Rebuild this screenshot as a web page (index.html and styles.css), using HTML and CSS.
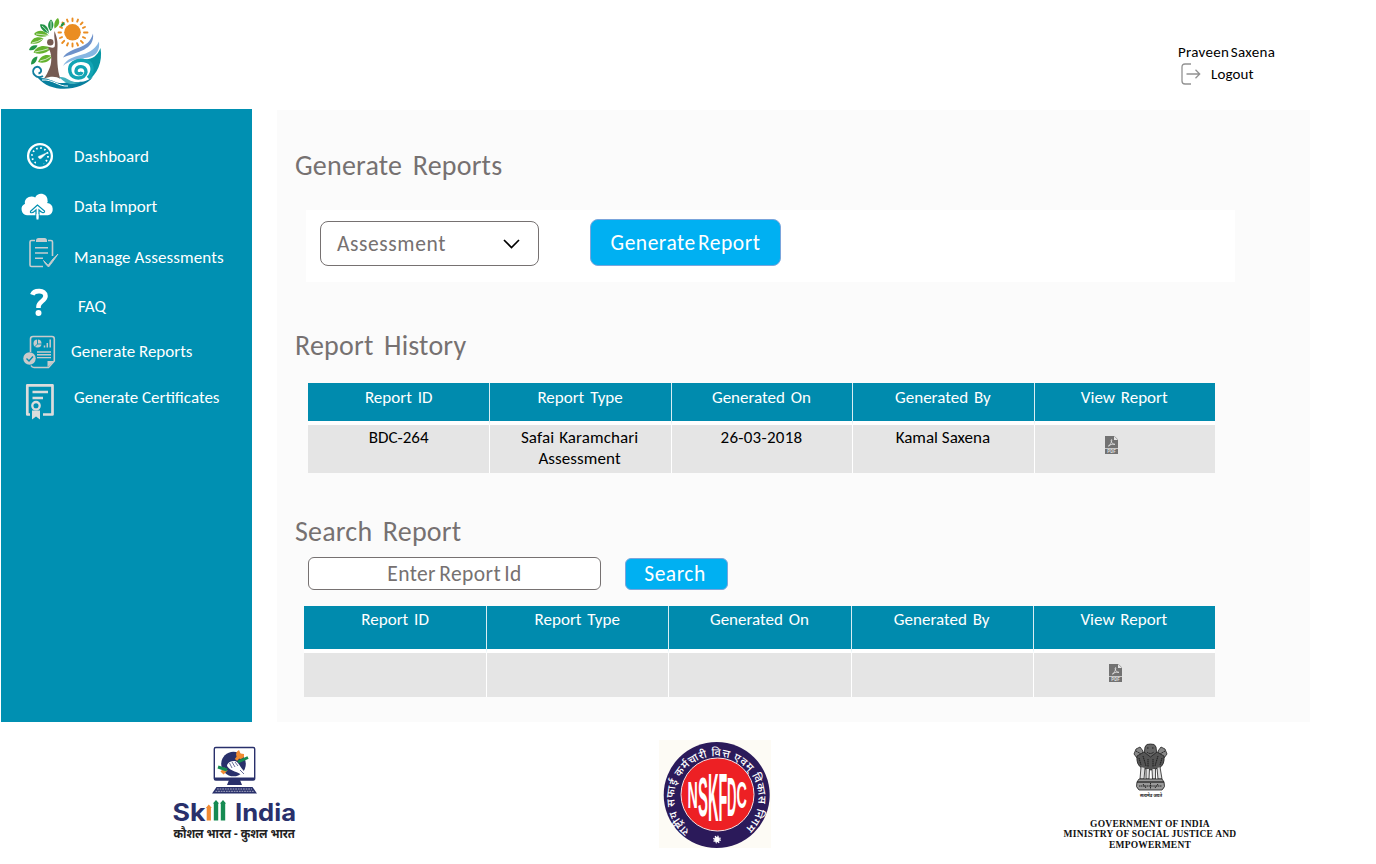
FILE: index.html
```html
<!DOCTYPE html>
<html lang="en">
<head>
<meta charset="utf-8">
<title>Generate Reports</title>
<link rel="stylesheet" href="styles.css">
</head>
<body>
<svg width="0" height="0" class="defs" aria-hidden="true">
  <symbol id="pdf" viewBox="0 0 13 18">
    <path d="M0 0H9L13 4V12.2H0Z" fill="#727272"/>
    <path d="M9 0V4H13Z" fill="#e4e4e4"/>
    <path d="M9.5 .3L12.8 3.6" stroke="#999" stroke-width=".7"/>
    <rect y="13" width="13" height="5" fill="#727272"/>
    <path d="M6.2 3.3C7.2 3.3 6.7 5 6.3 6.2C5.6 8.2 4.3 10.4 3.5 10.2C2.7 9.6 6 8 10 8.3C9 8.9 6.3 7.4 6 4.2" fill="none" stroke="#ddd" stroke-width=".9"/>
    <text x="6.5" y="17" text-anchor="middle" class="pdf-label">PDF</text>
  </symbol>
</svg>

<header class="header">
  <svg class="brand" width="76" height="76" viewBox="27 15 76 76">
    <circle cx="72.500" cy="32.300" r="8.300" fill="#ea8d22"/>
    <g stroke="#ea8d22" stroke-width="1.900" stroke-linecap="round">
      <path d="M72.500 18.500v2.500M72.500 43.500v3M58.500 32.500h2.500M84 32.500h3.500M62.500 22.500l1.800 1.800M80.900 40.900l2 2M82.500 22.500l-1.800 1.800M64.200 40.800l-2 2.200M67 19.600l.8 2M78 19.600l-.8 2M68 43.200l-1 2.300M77 43.200l1 2.300M60 27l2 .9M85 27l-2 .9M60 38l2-.9M85 38l-2-.9"/>
    </g>
    <g fill="#64b22e">
      <path d="M34 34C38 29.500 44 29.500 48.500 35.500C43 37.500 37 37 34 34Z"/>
      <path d="M30.500 43.500C32 37.500 38 36 43.500 38.500C41 43 36 44.500 30.500 43.500Z"/>
      <path d="M33.500 52.500C37 45.500 44 44.500 51 48C47.500 53.500 40 55 33.500 52.500Z"/>
      <path d="M38 62C40.500 55.500 46 53.500 52 56C50 61.500 44 64 38 62Z"/>
      <path d="M54.500 28.500C53.500 24 55 20 58 18C60.500 22 59 26 54.500 28.500Z"/>
    </g>
    <g fill="#229446">
      <path d="M40 24.500C45 23.500 48.500 27 49 33.500C44 32.500 40.500 29 40 24.500Z"/>
      <path d="M50.500 31C47 27 47.500 22.500 51 19.500C54.500 23 54 27.500 50.500 31Z"/>
      <path d="M29 50C30 46 33.500 44.500 37.500 45.500C36 49 33 51 29 50Z"/>
      <path d="M31 64.500C31 60 33.500 57 37.500 56.500C37 61 35 64 31 64.500Z"/>
      <path d="M60.500 27C60.500 24 62 22.500 64.500 22C64.500 25 63 26.500 60.500 27Z"/>
    </g>
    <g stroke="#fff" stroke-width=".7" fill="none"><path d="M35 52q7-1 15-3.800M40 61q6-1 11-4.700M32 43q6-1 10.500-4M36 34q6 .5 12 1.500M42 26q4 3 6.500 7M51 21v8"/></g>
    <circle cx="50.300" cy="42.200" r="3.200" fill="#765b52"/>
    <path d="M54.500 31C53.500 38 56 43 54.500 47C52.500 49 49 46 48 48C52 52 52 62 50 67C48 72 46 76 44 78.500C51 76 56 76 60.500 79C57 70 57 58 57.500 47C58 40 56 35 54.500 31Z" fill="#765b52"/>
    <path d="M63 57.500C72 45 88 51 93 33.500C95 50 77 52 63 57.500Z" fill="#6e92cb"/>
    <path d="M63 66C71 51 90 60 99 41.500C101 60 84 57 74 60C69 62 66 63 63 66Z" fill="#86b6e2"/>
    <path d="M80 58C88 61 96 59 100.500 48C103 62 97 74 88 81C94 73 93 62 80 58Z" fill="#0896a4"/>
    <path d="M88 78C94 72 94 62 84 60.500C76 59 68 64 70 72C72 80 85 80 86 72C86 65 76 65 76 71C76 74 81 75 82 72" fill="none" stroke="#12a4b4" stroke-width="3.400"/>
    <path d="M43 76C36 80 30 72 35 67.500C40 65 44 72 38.500 73.500" fill="none" stroke="#127f9f" stroke-width="1.900"/>
    <path d="M38 78C51 77 54 84 64 83C74 79 81 86 93 77C82 91 51 94 38 78Z" fill="#087f9e"/>
    <path d="M59 77C68 76 70 84 81 82C71 86 66 84 59 77Z" fill="#43b1be"/>
    <path d="M42 80C53 79 59 87 68 86" fill="none" stroke="#fff" stroke-width="1"/>
  </svg>
  <div class="user">
    <div class="user-name">Praveen Saxena</div>
    <a class="logout">
      <svg width="20" height="22" viewBox="0 0 20 22" fill="none" stroke="#929292" stroke-width="1.300"><path d="M10 1H4Q1 1 1 4V18Q1 21 4 21H10M5.500 11H18.500M14.500 6.800L18.700 11L14.500 15.200"/></svg>
      <span>Logout</span>
    </a>
  </div>
</header>

<div class="main">
  <nav class="sidebar">
    <a class="nav-item dash">
      <svg width="44" height="48" viewBox="18 132 44 48"><circle cx="40" cy="156" r="11.900" fill="none" stroke="#fff" stroke-width="2.300"/><circle cx="40" cy="156" r="8" fill="none" stroke="#fff" stroke-width="1.800" stroke-dasharray="1.600 2.589"/><path d="M35.500 161H44.500L43 166H37Z" fill="#0090b2"/><path d="M38.300 156.400L47.500 152.500L41 158.600A2 2 0 0 1 38.300 156.400Z" fill="#fff" stroke="#fff" stroke-width=".4"/></svg>
      <span>Dashboard</span></a>
    <a class="nav-item import">
      <svg width="44" height="48" viewBox="18 182 44 48"><path d="M27 215.200A6 6 0 0 1 25 203.800C23.500 198 31 194.500 35.200 197.500C38 191 48 193.500 47.500 200.500C48 201.500 47.500 202.500 47 203A6.200 6.200 0 0 1 48 215.200Z" fill="#fff"/><path d="M37.500 205L30.500 211.300V212.500Q32.500 213.500 36 210V218.500Q37.500 220 39 218.500V210Q43 214 44.500 212V211Z" fill="#fff" stroke="#0090b2" stroke-width="1.200"/><path d="M36.500 214h2v5.500h-2z" fill="#fff"/></svg>
      <span>Data Import</span></a>
    <a class="nav-item manage">
      <svg width="44" height="48" viewBox="18 233 44 48"><path d="M35 240.500H31.500Q30 240.500 30 242V265Q30 266.500 31.500 266.500H43M48 240.500H51Q52.500 240.500 52.500 242V256" fill="none" stroke="#c7cdcf" stroke-width="1.600"/><path d="M36 242V240.500Q36 238 38.500 238H44.500Q47 238 47 240.500V242Z" fill="#c7cdcf"/><path d="M35 247.700H48M35 253H48M35 258.300H43" stroke="#c7cdcf" stroke-width="1.600"/><path d="M43.500 260.500L48.200 265.200Q53 258 58 254Q52 263 48.500 267Q45 264 43.500 260.500Z" fill="#c7cdcf" stroke="#c7cdcf" stroke-width=".9"/></svg>
      <span>Manage Assessments</span></a>
    <a class="nav-item faq">
      <svg width="44" height="48" viewBox="18 282 44 48" fill="none" stroke="#fff"><path d="M32.300 294.800C34 289.800 45.500 289.500 45.500 296C45.500 301 38.500 301.500 38.500 306.500V308" stroke-width="4.600"/><circle cx="38.500" cy="313" r="1.500" stroke-width="3"/></svg>
      <span>FAQ</span></a>
    <a class="nav-item reports">
      <svg width="44" height="48" viewBox="18 327 44 48"><path d="M30.500 352V339Q30.500 336.500 33 336.500H52Q54.300 336.500 54.300 339V361L48.500 367.500H34Q32 367.500 31 365.500" fill="none" stroke="#cacaca" stroke-width="1.600"/><path d="M47.500 367V361H54Z" fill="#cacaca"/><circle cx="37.500" cy="343.500" r="4" fill="#cacaca"/><path d="M37.500 339V344H42M37.500 344L34.500 347" stroke="#0090b2" fill="none" stroke-width=".9"/><path d="M44.500 347.500v-2M47.300 347.500v-4.500M50.200 347.500v-8" stroke="#cacaca" stroke-width="1.500"/><path d="M37 352H51M37 354.800H51M37 357.600H51" stroke="#cacaca" stroke-width="1.400"/><circle cx="29.500" cy="358.500" r="6.200" fill="#cacaca"/><path d="M26.500 358.500L29 361L33 356.500" fill="none" stroke="#0090b2" stroke-width="1.400"/></svg>
      <span>Generate Reports</span></a>
    <a class="nav-item certs">
      <svg width="44" height="48" viewBox="18 373 44 48" fill="none" stroke="#dcdcdc"><path d="M30 414.500H27.300V385.300H52.500V414.500H43" stroke-width="2.700" stroke-linejoin="round"/><path d="M32.500 392H48M32.500 398H43" stroke-width="2.400"/><circle cx="36" cy="405.700" r="3.700" stroke-width="2.300"/><path d="M32 410.500H40V419.500L36 416.500L32 419.500Z" fill="#dcdcdc" stroke="none"/></svg>
      <span>Generate Certificates</span></a>
  </nav>

  <main class="content">
    <h2 class="title">Generate Reports</h2>
    <section class="generator">
      <div class="select"><span>Assessment</span><svg width="17" height="10" viewBox="0 0 17 10"><path d="M1 1L8.500 8.500L16 1" fill="none" stroke="#000" stroke-width="1.700"/></svg></div>
      <button class="button generate">Generate Report</button>
    </section>

    <h2 class="title history-title">Report History</h2>
    <table class="table history">
      <thead><tr><th>Report ID</th><th>Report Type</th><th>Generated On</th><th>Generated By</th><th>View Report</th></tr></thead>
      <tbody><tr><td>BDC-264</td><td class="type">Safai Karamchari<br>Assessment</td><td class="date">26-03-2018</td><td>Kamal Saxena</td><td class="view"><svg width="13" height="18"><use href="#pdf"/></svg></td></tr></tbody>
    </table>

    <h2 class="title search-title">Search Report</h2>
    <div class="search">
      <div class="field">Enter Report Id</div>
      <button class="button find">Search</button>
    </div>
    <table class="table results">
      <thead><tr><th>Report ID</th><th>Report Type</th><th>Generated On</th><th>Generated By</th><th>View Report</th></tr></thead>
      <tbody><tr><td></td><td></td><td></td><td></td><td class="view"><svg width="13" height="18"><use href="#pdf"/></svg></td></tr></tbody>
    </table>
  </main>
</div>

<footer class="footer">
  <svg width="130" height="106" viewBox="170 742 130 106">
    <rect x="214.300" y="747.500" width="40.400" height="32.500" rx="1.500" fill="#fff" stroke="#29306b" stroke-width="1.400"/>
    <path d="M214 777.500H255V780H214Z" fill="#29306b"/>
    <path d="M229 780H240L242 785H227Z" fill="#29306b"/>
    <path d="M216.500 787H252.500L257 793.500H212Z" fill="#29306b"/>
    <path d="M217 789H252M215.500 791.300H254" stroke="#fff" stroke-width=".6" stroke-dasharray="1.800 .8"/>
    <circle cx="233.500" cy="764" r="12.300" fill="#29306b"/>
    <path d="M222 773L226 769" stroke="#f28b32" stroke-width="4.500"/>
    <path d="M236 760L239.500 755.500" stroke="#f28b32" stroke-width="3"/>
    <path d="M236.500 756.500Q235 752 239 750L240.500 753.500L244 754V757Q240 761 236.500 756.500Z" fill="#f28b32"/>
    <path d="M218 767L227 770M238 762L248 757.500" stroke="#168b52" stroke-width="3"/>
    <path d="M227 766C227 763 231 760.500 235 761C239 762 240 768 246 773L243 776C238 771 231 772 227 766Z" fill="#fff"/>
    <path d="M229.500 763L232 768M232 762L235 767M235 762L238 766M240 770L244 774" stroke="#29306b" stroke-width=".7"/>
    <g class="skill-word"><text x="172.500" y="820.500" textLength="33" lengthAdjust="spacingAndGlyphs">Sk</text><text x="235" y="820.500" textLength="61" lengthAdjust="spacingAndGlyphs">India</text></g>
    <path d="M206.700 820.500V808H205.800L208.800 804.500L211.800 808H210.900V820.500Z" fill="#f28b32"/>
    <path d="M213.800 820.500V803.500H212.900L216 800L219.100 803.500H218.200V820.500Z" fill="#168b52"/>
    <path d="M220.800 820.500V803.500H219.900L223 800L226.100 803.500H225.200V820.500Z" fill="#168b52"/>
    <text x="173.500" y="838" textLength="121.500" lengthAdjust="spacingAndGlyphs" class="skill-hindi">कौशल भारत - कुशल भारत</text>
  </svg>

  <svg width="112" height="110" viewBox="659 740 112 110">
    <rect x="659" y="740" width="112" height="108" fill="#fdfbf5"/>
    <circle cx="716.700" cy="795" r="53" fill="#2b1a5a"/>
    <circle cx="717.500" cy="794.500" r="36.500" fill="#ed2024" stroke="#f7dfe0" stroke-width="1"/>
    <path id="ring" d="M690.500 831.500A42 42 0 1 1 745 829" fill="none"/>
    <text class="ring-text"><textPath href="#ring" startOffset="1" textLength="202" lengthAdjust="spacing">राष्ट्रीय सफाई कर्मचारी वित्त एवम् विकास निगम</textPath></text>
    <g class="seal-word">
      <text transform="translate(687.500 808) scale(.84 2.200)">N</text>
      <text transform="translate(698 816) scale(.88 3.250)">S</text>
      <text transform="translate(708 821) scale(.86 4)">K</text>
      <text transform="translate(718.500 821) scale(.84 4)">F</text>
      <text transform="translate(727 816) scale(.77 3.250)">D</text>
      <text transform="translate(736.500 808) scale(.85 2.200)">C</text>
    </g>
    <circle cx="717" cy="839.500" r="2.800" fill="#fff"/><circle cx="717" cy="839.500" r="3.300" fill="none" stroke="#fff" stroke-width="1.300" stroke-dasharray="1.300 1.292"/>
  </svg>

  <div class="ministry">
    <svg width="112" height="62" viewBox="1094 740 112 62">
      <g fill="#555" stroke="#222" stroke-width=".8">
        <path d="M1136 749L1140 747L1143 751L1142 759L1137 758L1134 754ZM1165 749L1161 747L1158 751L1159 759L1164 758L1167 754Z" fill="#888"/>
        <path d="M1145 747Q1146 743.500 1150.500 744Q1155 743.500 1156 747L1157 755L1151 758L1144 755Z" fill="#666"/>
        <path d="M1137 756L1144 752L1150.500 757L1157 752L1164 756Q1165 765 1159 768L1151 770L1142 768Q1136 765 1137 756Z"/>
        <path d="M1141 767L1140 779H1144L1145 768M1146 769V779H1149L1149.500 769M1152 769L1152.500 779H1155.500V769M1157 768L1158 779H1162L1160 767" fill="#ddd"/>
        <path d="M1139 779H1162L1164 782H1137ZM1137 782Q1135 787 1139 790H1162Q1166 787 1164 782Z" fill="#999"/>
      </g>
      <path d="M1139 758L1141 765M1143 756L1146 766M1148 759V767M1153 759V767M1158 756L1155 766M1162 758L1160 765M1136 751l5 3M1165 751l-5 3M1147 748h2M1152 748h2M1147 752q3 3 7 0M1139 786h23M1150.500 783v6M1143 784l3 4M1158 784l-3 4" stroke="#161616" stroke-width=".9" fill="none" stroke-dasharray="1.400 .5"/>
      <text x="1140" y="797" textLength="22" lengthAdjust="spacingAndGlyphs" class="motto">सत्यमेव जयते</text>
    </svg>
    <p>GOVERNMENT OF INDIA<br>MINISTRY OF SOCIAL JUSTICE AND<br>EMPOWERMENT</p>
  </div>
</footer>
</body>
</html>
```
FILE: styles.css
```css
* { box-sizing: border-box; }
body {
  margin: 0;
  width: 1376px;
  height: 864px;
  overflow: hidden;
  background: #fff;
  color: #111;
  font-family: Carlito, Lato, sans-serif;
  font-size: 17px;
}
.defs { position: absolute; }
.pdf-label { font: 700 4.500px Roboto, sans-serif; fill: #ddd; }

.header {
  height: 109px;
  display: flex;
  justify-content: space-between;
  padding: 15px 101px 0 27px;
}
.user { padding-top: 27px; font-size: 15px; color: #000; }
.user-name { line-height: 21px; width: 97px; white-space: nowrap; letter-spacing: .3px; word-spacing: -2px; }
.logout { display: flex; align-items: center; gap: 10px; height: 22px; padding-left: 3px; letter-spacing: .1px; }

.main { display: flex; gap: 25px; height: 613px; padding-left: 1px; }
.sidebar { width: 251px; background: #0090b2; padding-top: 22px; color: #fff; }
.nav-item {
  display: flex;
  align-items: center;
  height: 50px;
  padding-left: 17px;
  gap: 12px;
  white-space: nowrap;
}
.nav-item svg { flex: none; }
.nav-item.manage { height: 52px; letter-spacing: .1px; }
.nav-item.faq { height: 46px; gap: 16px; }
.nav-item.reports { height: 44px; gap: 9px; }
.nav-item.certs { height: 48px; }

.content {
  width: 1033px;
  margin-top: 1px;
  padding: 36px 0 0 18px;
  background: #fbfbfb;
}
.title {
  margin: 0;
  height: 38px;
  line-height: 40px;
  font-size: 28px;
  font-weight: 400;
  color: #767171;
  letter-spacing: .2px;
  word-spacing: 4px;
}
.generator {
  display: flex;
  gap: 51px;
  width: 929px;
  height: 72px;
  margin: 26px 0 0 11px;
  padding: 9px 0 0 14px;
  background: #fff;
}
.select {
  display: flex;
  justify-content: space-between;
  align-items: center;
  width: 219px;
  height: 45px;
  margin-top: 2px;
  padding: 0 18px 0 16px;
  border: 1px solid #767171;
  border-radius: 8px;
  color: #767171;
  font-size: 21.500px;
  letter-spacing: .6px;
}
.button {
  padding: 0;
  border: 1px solid #7aa5dc;
  border-radius: 8px;
  background: #00b0f2;
  color: #fff;
  font-family: inherit;
  font-size: 21.500px;
  letter-spacing: .5px;
  word-spacing: -3px;
}
.generate { width: 191px; height: 47px; padding-top: 1px; }
.history-title { margin-top: 44px; }

.table {
  table-layout: fixed;
  border-collapse: separate;
  border-spacing: 0;
  line-height: 21px;
  text-align: center;
}
.table th {
  height: 42px;
  padding: 4px 1px 0 0;
  border-left: 1px solid #d9edf2;
  border-bottom: 4px solid #fff;
  background: #008bae;
  color: #fff;
  font-weight: 400;
  vertical-align: top;
  word-spacing: 2px;
}
.table td {
  height: 48px;
  padding: 2px 1px 0 0;
  border-left: 1px solid #fff;
  background: #e5e5e5;
  color: #000;
  vertical-align: top;
}
.table th:first-child, .table td:first-child { border-left: 0; padding-right: 0; }
.table .date { letter-spacing: .25px; }
.table .type { letter-spacing: .1px; word-spacing: 1px; padding-right: 2px; }
.history { width: 907px; margin: 19px 0 0 13px; }
.table .view { padding: 11px 0 0 70px; text-align: left; }
.view svg { display: block; }
.search-title { margin-top: 39px; }
.search { display: flex; gap: 24px; margin: 7px 0 0 13px; }
.field {
  width: 293px;
  height: 33px;
  border: 1px solid #767171;
  border-radius: 6px;
  background: #fff;
  color: #767171;
  font-size: 21.500px;
  line-height: 33px;
  text-align: center;
  letter-spacing: .4px;
  word-spacing: -2px;
}
.find { width: 103px; height: 32px; margin-top: 1px; padding-right: 3px; border-radius: 6px; line-height: 30px; }
.results { width: 911px; margin: 16px 0 0 9px; }
.results th { height: 47px; padding-top: 3px; }
.results td { height: 44px; }
.results .view { padding-left: 75px; }

.footer { display: flex; padding: 18px 0 0 170px; height: 142px; align-items: flex-start; }
.footer svg { overflow: visible; }
.footer > svg:first-child { margin: 2px 359px 0 0; }
.skill-word { font: 700 24px Inter, sans-serif; fill: #29306b; }
.skill-hindi { font: 700 13px "Noto Sans", "Noto Sans Devanagari", sans-serif; fill: #222; }
.ring-text { font: 500 11px "Noto Sans", "Noto Sans Devanagari", sans-serif; fill: #fff; }
.seal-word { font: 700 17px "Liberation Sans", sans-serif; fill: #fff; }
.motto { font: 700 5px "Noto Sans", "Noto Sans Devanagari", sans-serif; fill: #222; }
.ministry { width: 180px; margin-left: 289px; text-align: center; }
.ministry svg { display: block; margin: 0 auto; }
.ministry p { margin: 16.500px 0 0; font: 700 9.500px/10.500px "Liberation Serif", serif; letter-spacing: .22px; color: #111; white-space: nowrap; }
```
